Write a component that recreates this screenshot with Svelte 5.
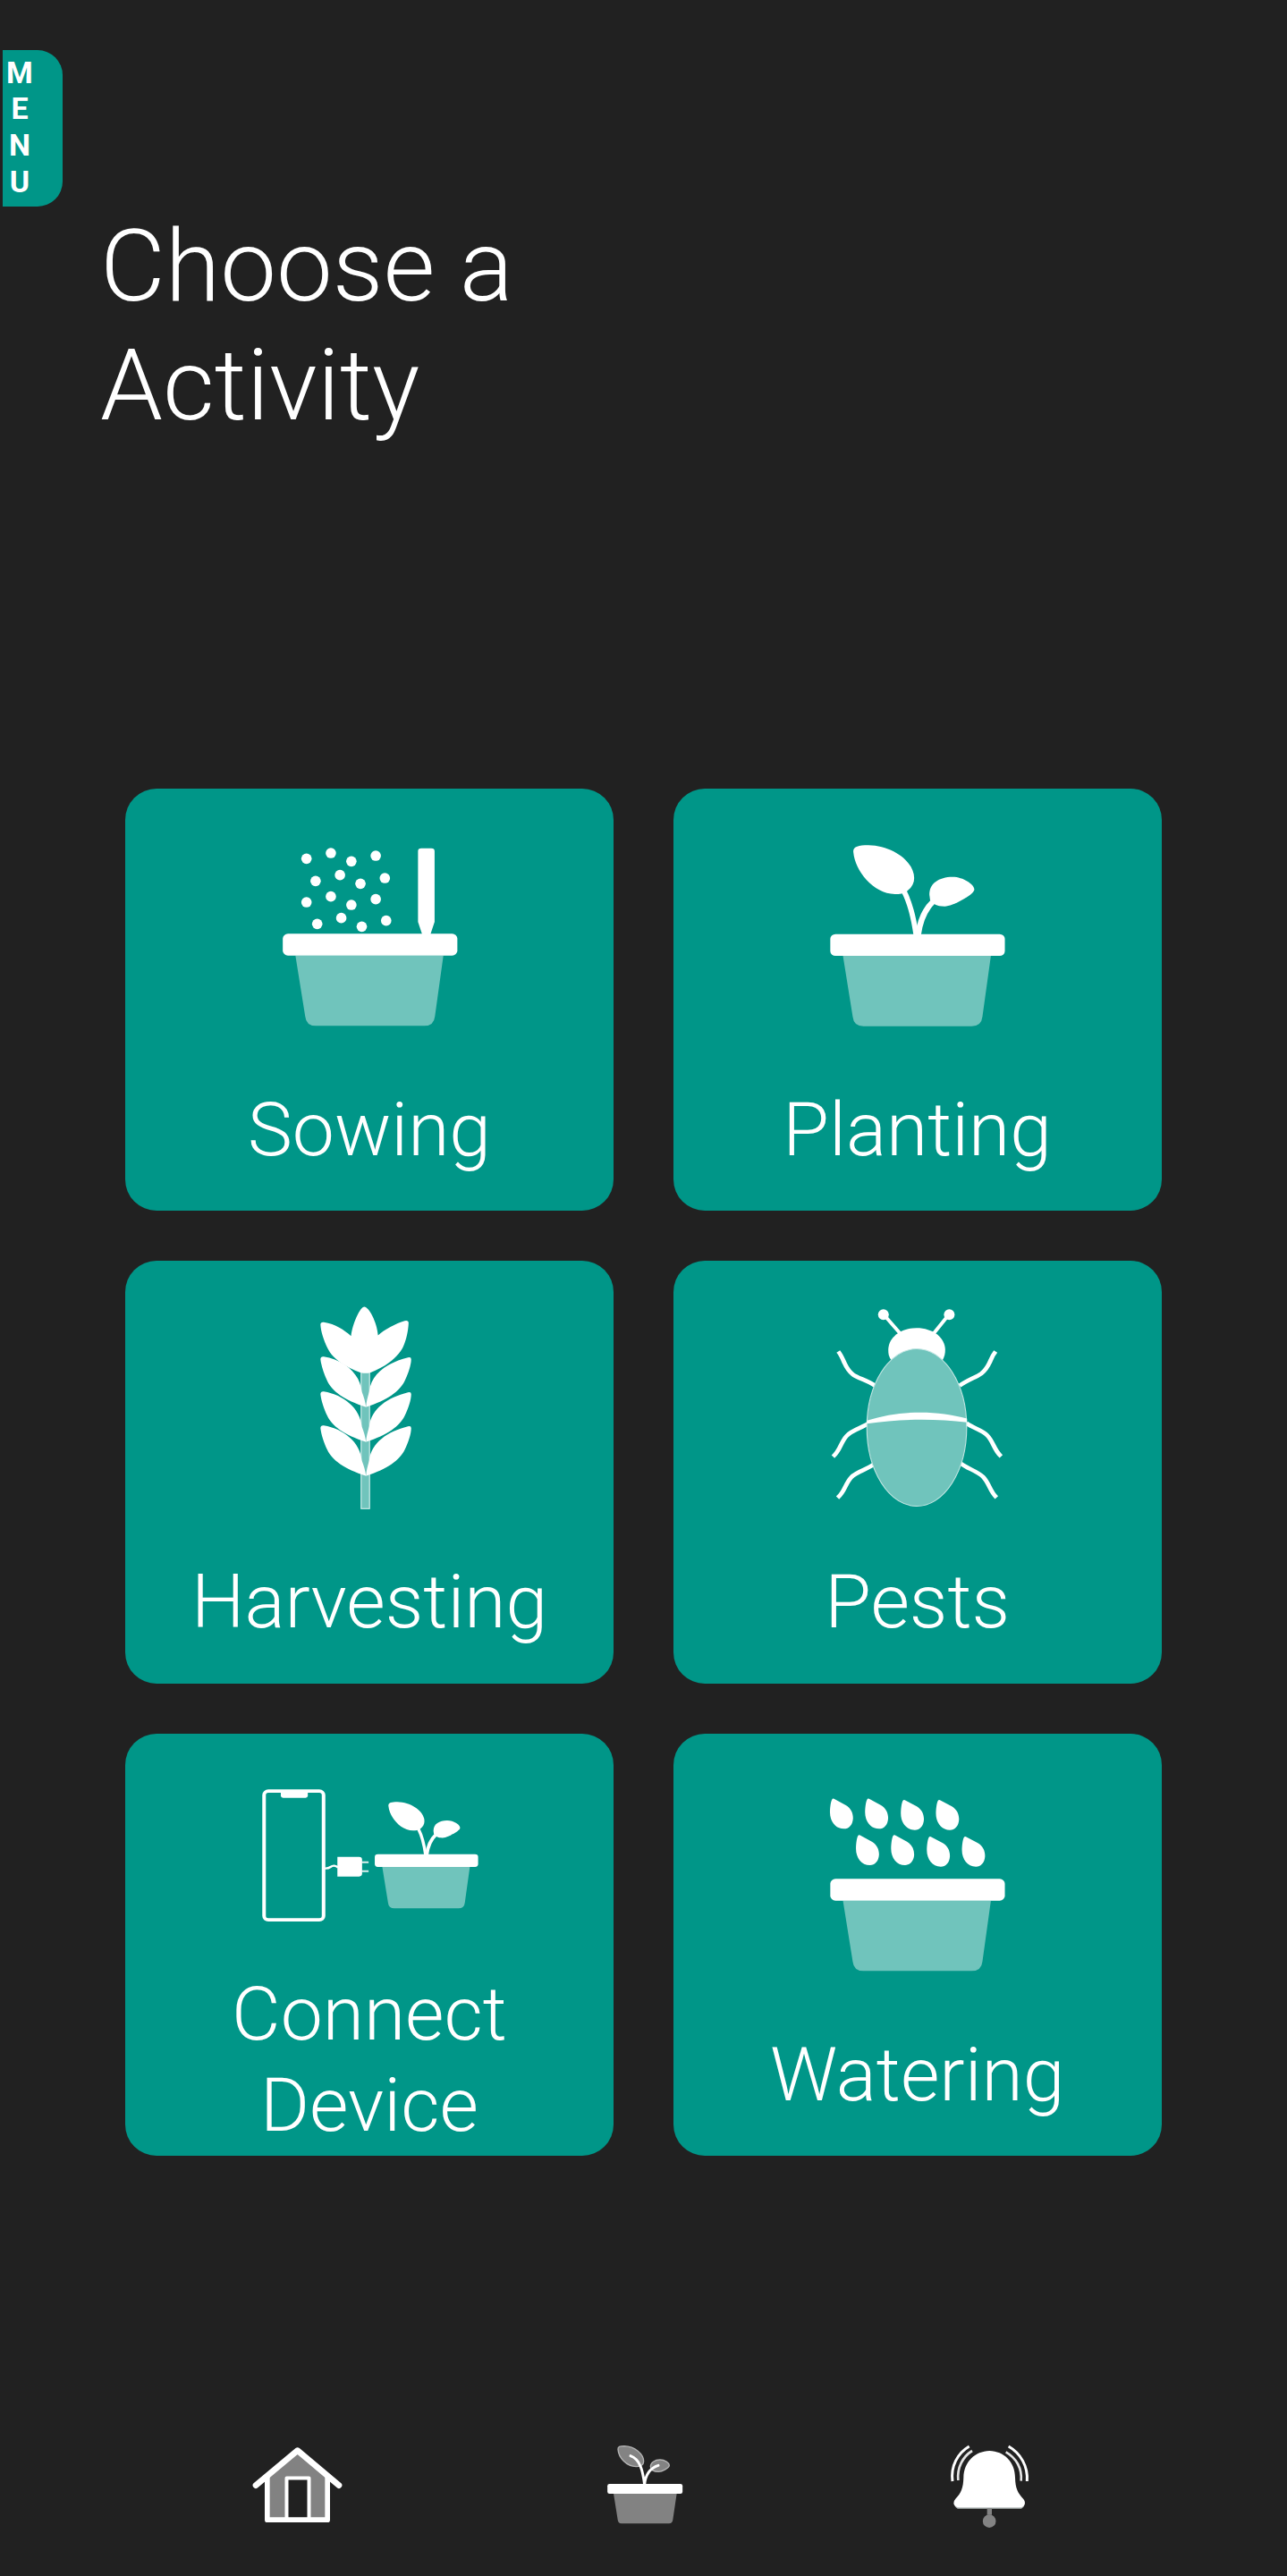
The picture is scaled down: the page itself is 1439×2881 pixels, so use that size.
<script>
  const tiles = [
    { id: 'sowing', label: 'Sowing', view: '379.5 170 800 710' },
    { id: 'planting', label: 'Planting', view: '386 170 800 710' },
    { id: 'harvesting', label: 'Harvesting', view: '379.5 165.5 800 710' },
    { id: 'pests', label: 'Pests', view: '385.5 165.5 800 710' },
    { id: 'connect', label: 'Connect Device', view: '379.5 160 800 508', short: true },
    { id: 'watering', label: 'Watering', view: '386 160 800 710' }
  ];

  const seeds = [
    [585, 270], [660, 251], [723, 279], [798, 260],
    [613, 345], [688, 325], [751, 354], [826, 335],
    [585, 416], [660, 397], [723, 425], [798, 406],
    [618, 489], [692, 469], [755, 498], [830, 478]
  ];

  const drops = [
    [0, 0], [108, 0], [218, 4], [326, 4],
    [80, 122], [188, 122], [298, 127], [406, 127]
  ];

  const leafRows = [0, -114, -231];
</script>

{#snippet pot()}
  <g>
    <path class="soft" d="M558 596H1013L987 800Q984 832 954 832H621Q591 832 588 800Z" />
    <rect x="519" y="523" width="537" height="73" rx="16" ry="16" />
  </g>
{/snippet}

{#snippet plant()}
  <g>
    <path d="M590 248C588 230 605 225 636 225C712 227 777 280 777 335C777 352 770 367 755 379C745 387 732 389 718 389C650 387 595 310 590 248Z" />
    <path d="M824 392C822 354 853 331 895 331C928 331 962 356 962 374C962 390 895 430 871 430C858 430 849 428 842 424L826 408Z" />
    <path class="line" stroke-width="16" d="M746 380C764 418 777 480 783 526" />
    <path class="line" stroke-width="18" d="M836 413C806 444 794 486 789 526" />
    {@render pot()}
  </g>
{/snippet}

<main>
  <button class="menu"><span>M</span><span>E</span><span>N</span><span>U</span></button>

  <h1>Choose a<br />Activity</h1>

  <section class="grid">
    {#each tiles as tile}
      <article class="tile">
        <svg class="art" class:short={tile.short} viewBox={tile.view} preserveAspectRatio="none">
          {#if tile.id === 'sowing'}
            {#each seeds as [x, y]}
              <ellipse cx={x} cy={y} rx="16" ry="17.5" />
            {/each}
            <path d="M928 245Q928 235 938 235H969Q979 235 979 245V482L966 525H941L928 482Z" />
            <g transform="translate(-7 -1)">{@render pot()}</g>
          {:else if tile.id === 'planting'}
            {@render plant()}
          {:else if tile.id === 'harvesting'}
            <rect class="soft" x="752" y="400" width="28" height="464" />
            <path class="line" stroke-width="3" opacity=".75" d="M753 400V862H779V400" />
            {#each leafRows as dy}
              <g transform="translate(0 {dy})">
                <path d="M769 753C700 728 664 700 649 665C638 640 630 612 628 592Q628 582 638 583C700 594 750 640 755 700C762 720 766 735 768 753Z" />
                <path d="M767 753C836 728 871 700 887 665C898 640 907 612 907 592Q907 583 897 586C835 603 784 640 778 700C773 720 769 735 768 753Z" />
              </g>
            {/each}
            <path d="M752 406C700 386 664 357 649 322C638 297 629 267 628 245Q628 236 638 237C675 243 700 263 722 283C727 240 750 185 763 185C776 185 802 235 805 281C825 260 860 241 887 232Q899 229 899 240C898 265 892 298 882 320C868 352 830 386 781 406Q768 410 752 406Z" />
          {:else if tile.id === 'pests'}
            <path class="line" stroke-width="11" d="M682 210L733 274M884 210L837 274" />
            <ellipse cx="682" cy="211" rx="16.5" ry="18" />
            <ellipse cx="884.500" cy="211" rx="16.500" ry="18" />
            <path d="M706 364C698 352 697 342 697 330C697 288 735 256 784 256C834 256 872 288 872 330C872 342 870 352 864 364Z" />
            <g class="line" stroke-width="13.500">
              <path d="M543 335C562 360 561 390 588 412C604 425 635 432 656 450" />
              <path d="M1027 335C1008 360 1011 386 983 409C966 422 940 431 916 450" />
              <path d="M635 577C614 592 586 598 569 618C550 640 550 666 527 688" />
              <path d="M937 575C956 592 982 596 1001 616C1021 638 1021 664 1044 687" />
              <path d="M652 714C630 732 601 737 583 757C564 779 564 804 541 826" />
              <path d="M919 710C942 729 968 735 988 755C1008 777 1008 802 1030 825" />
            </g>
            <ellipse cx="784.500" cy="590" rx="153.500" ry="264" fill="#70c4bc" stroke="#c3e6e3" stroke-width="3" />
            <path d="M631 567C735 531 846 532 939 560V573C846 560 735 560 631 577Z" />
          {:else if tile.id === 'connect'}
            <rect class="line" x="454.500" y="220.500" width="183" height="432" rx="13" stroke-width="11" />
            <path d="M506 222H589V236Q589 243 582 243H513Q506 243 506 236Z" />
            <path class="line" stroke-width="7" d="M641 480C659 482 658 470 670 471Q677 472 682 477" />
            <path d="M680 441H747Q756 441 756 451V497Q756 507 747 507H680Z" />
            <path class="line" stroke-width="6" opacity=".85" d="M755 459H776M755 489H776" />
            <g transform="translate(487.750 123.950) scale(.592 .589)">{@render plant()}</g>
          {:else}
            {#each drops as [x, y]}
              <path transform="translate({x} {y})" d="M524 249Q527 243 533 248L567 268C582 278 589 293 589 312C588 334 576 347 561 347C535 347 518 322 518 292C518 278 520 258 524 249Z" />
            {/each}
            <g transform="translate(0 -8)">{@render pot()}</g>
          {/if}
        </svg>
        <h2>{tile.label}</h2>
      </article>
    {/each}
  </section>

  <nav>
    <svg class="home" viewBox="0 0 390 360">
      <path class="soft" d="M86 150L188 64L289 150V294H227V154H151V294H86Z" />
      <path class="line" stroke-width="17" stroke-linejoin="round" d="M86.500 145V294.500H288.500V145" />
      <path class="line" stroke-width="12" stroke-linejoin="round" d="M151.500 294V154.500H226.500V294" />
      <path class="line" stroke-width="20" stroke-linecap="round" stroke-linejoin="round" d="M48 179L188 62L327 179" />
    </svg>
    <svg class="plants" viewBox="0 0 390 360">
      <path class="leaf" d="M93 58C92 49 99 47 114 47C149 48 179 74 179 99C179 110 168 116 154 116C120 115 95 85 93 58Z" />
      <path class="leaf" d="M202 116C202 103 216 93 234 93C250 93 265 104 265 112C265 120 241 133 229 133C214 133 203 128 202 116Z" />
      <path class="line" stroke-width="9" stroke-linecap="round" d="M135 80C168 92 176 130 182 177C184 145 201 120 228 112" />
      <path class="soft" d="M78 206H290L277 294Q275 307 264 307H104Q94 307 92 294Z" />
      <rect x="57.500" y="174" width="252" height="33" rx="7" />
    </svg>
    <svg class="alerts" viewBox="0 0 390 360">
      <path fill="#b8bfbe" d="M83 250H315L306 257H92Z" />
      <path d="M199 63C247 64 285 100 285 152C286 190 294 204 313 225Q320 233 317 243Q314 253 300 253H98Q84 253 80 243Q77 233 85 224C104 204 111 188 112 152C113 100 151 64 199 63Z" />
      <path class="grey" d="M191 256H207V278H191Z" />
      <circle class="grey" cx="198.500" cy="299" r="22" />
      <path class="line" stroke-width="9" d="M131 48C92 71 68 115 75 165M263 48C303 71 329 115 325 165" />
      <path class="line" stroke-width="8" opacity=".88" d="M141 63C109 83 90 119 94 162M254 67C289 87 309 122 305 164" />
    </svg>
  </nav>
</main>

<style>
  :global(body) {
    background: #212121;
  }

  main {
    box-sizing: border-box;
    width: 1439px;
    height: 2881px;
    overflow: hidden;
    padding-top: 56px;
    display: flex;
    flex-direction: column;
    background: #212121;
    color: #fff;
    font-family: Roboto, sans-serif;
  }

  .menu {
    box-sizing: border-box;
    width: 67px;
    height: 175px;
    margin: 0 0 0 3px;
    padding: 4.5px 29px 0 0;
    border: 0;
    border-radius: 0 28px 28px 0;
    background: #009688;
    color: #fff;
    font: 700 34px/40.8px Roboto, sans-serif;
    display: flex;
    flex-direction: column;
    align-items: center;
  }

  h1 {
    margin: 0 0 0 112px;
    font-weight: 300;
    font-size: 112px;
    line-height: 133px;
  }

  .grid {
    margin: 385px 140px 0;
    display: grid;
    grid-template-columns: 546px 546px;
    grid-auto-rows: 472.4px;
    gap: 56px 66.6px;
  }

  .tile {
    box-sizing: border-box;
    padding-top: 44.7px;
    border-radius: 35px;
    background: #009688;
    display: flex;
    flex-direction: column;
    align-items: center;
  }

  .art {
    flex: none;
    width: 290.8px;
    height: 236.7px;
  }

  .short {
    height: 169.3px;
  }

  h2 {
    width: 440px;
    margin: 49.7px 0 0;
    font-weight: 300;
    font-size: 84px;
    line-height: 102px;
    text-align: center;
  }

  nav {
    margin: 308.8px 0 0 270px;
    display: flex;
  }

  nav svg {
    width: 130px;
    height: 120px;
  }

  .plants {
    margin: 0 250px 0 260px;
  }

  svg {
    display: block;
    fill: #fff;
  }

  .soft {
    fill: rgba(255, 255, 255, 0.44);
  }

  .grey {
    fill: #838383;
  }

  .leaf {
    fill: #838383;
    stroke: #b4b4b4;
    stroke-width: 4;
  }

  .line {
    fill: none;
    stroke: #fff;
  }
</style>
